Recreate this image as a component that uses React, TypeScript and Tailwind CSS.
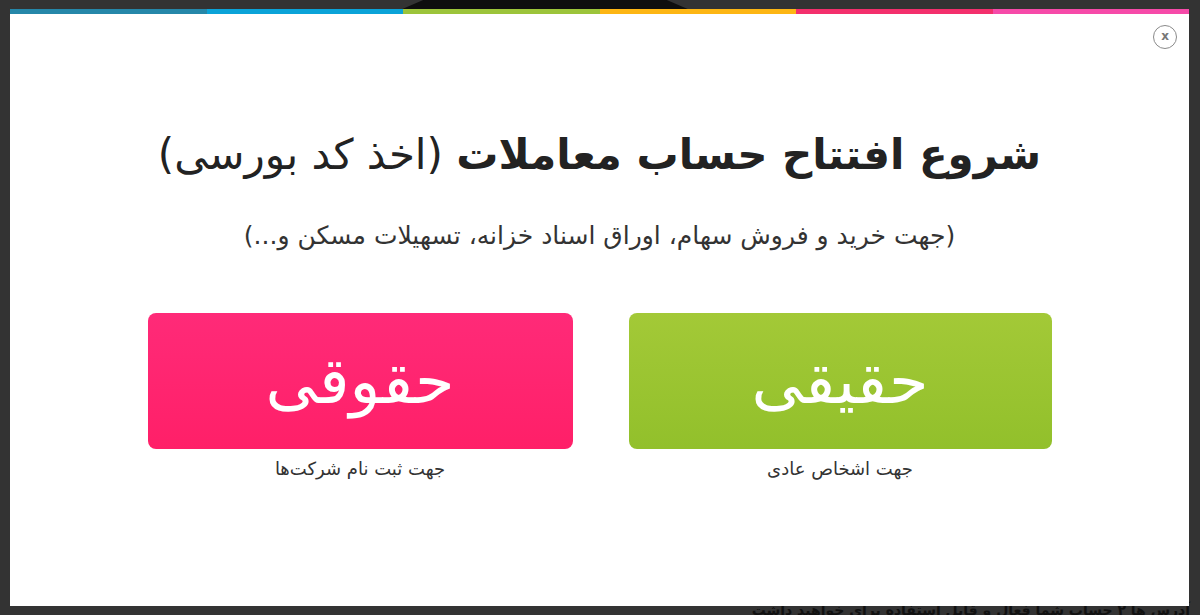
import React from "react";

const stripes = [
  "bg-[#2587a9]",
  "bg-[#0aa3d8]",
  "bg-[#9cc43a]",
  "bg-[#fdb614]",
  "bg-[#f32f6c]",
  "bg-[#f64aa9]",
];

const fa = { fontFamily: '"DejaVu Sans", "Noto Sans", sans-serif' };

export default function App() {
  return (
    <div className="relative h-[615px] w-[1200px] overflow-hidden bg-[#333333]" style={fa}>
      {/* page content peeking behind the overlay */}
      <div className="absolute left-[400px] top-0 h-[10px] w-[290px] bg-[#0e0e0e] [clip-path:polygon(8%_0,92%_0,100%_100%,0_100%)]" />
      <div className="absolute right-[10px] top-[600px] text-[14px] leading-[20px] font-bold text-[#111]" dir="rtl">
        آدرس ها ۲ حساب شما فعال و قابل استفاده برای خواهید داشت
      </div>

      <div className="relative ml-[10px] mt-[9px] h-[597px] w-[1179px] bg-white">
        <div className="flex h-[5px]">
          {stripes.map((c) => (
            <div key={c} className={`flex-1 ${c}`} />
          ))}
        </div>

        <button className="absolute right-[12px] top-[16px] flex h-[24px] w-[24px] items-center justify-center rounded-full border border-[#8a8a8a] pb-[2px] text-[12px] font-bold leading-none text-[#777]">
          x
        </button>

        <div dir="rtl" className="flex flex-col items-center">
          <h1 className="mt-[108px] text-[42px] leading-[66px] text-[#222]">
            <span className="font-bold">شروع افتتاح حساب معاملات</span>{" "}
            <span className="font-normal">(اخذ کد بورسی)</span>
          </h1>
          <p className="mt-[29px] text-[25px] leading-[38px] text-[#333]">
            (جهت خرید و فروش سهام، اوراق اسناد خزانه، تسهیلات مسکن و...)
          </p>

          <div className="mt-[58px] flex gap-[56px]">
            <div className="flex flex-col items-center">
              <div className="flex h-[136px] w-[423px] items-center justify-center rounded-[8px] bg-gradient-to-b from-[#a3c937] to-[#92c02b] text-[64px] text-white">
                حقیقی
              </div>
              <div className="mt-[7px] text-[18px] leading-[26px] text-[#333]">جهت اشخاص عادی</div>
            </div>
            <div className="flex flex-col items-center">
              <div className="flex h-[136px] w-[425px] items-center justify-center rounded-[8px] bg-gradient-to-b from-[#ff2a78] to-[#ff1f68] text-[64px] text-white">
                حقوقی
              </div>
              <div className="mt-[7px] text-[18px] leading-[26px] text-[#333]">جهت ثبت نام شرکت‌ها</div>
            </div>
          </div>
        </div>
      </div>
    </div>
  );
}
